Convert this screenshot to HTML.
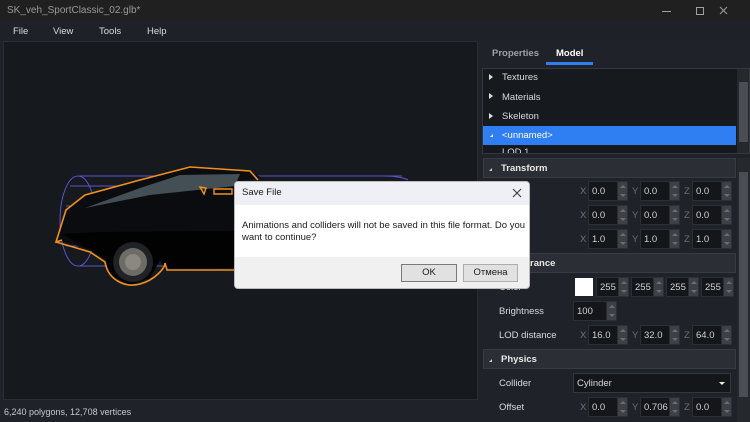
<!DOCTYPE html><html><head><style>
*{margin:0;padding:0;box-sizing:border-box}
body{width:750px;height:422px;overflow:hidden;background:#1f2228;font-family:"Liberation Sans",sans-serif;font-size:9.5px;color:#d8dadd;position:relative}
.a{position:absolute}
.inp{position:absolute;height:20px;width:40px;background:#141619;border:1px solid #2c3036}
.inp span{position:absolute;left:3px;top:4px;color:#d0d2d6}
.inp i{position:absolute;right:0;top:0;width:10px;height:18px;background:#3d4147;border-left:1px solid #2a2d32}
.inp i:before{content:"";position:absolute;left:2px;top:3px;border:3px solid transparent;border-bottom:3px solid #6a6e74;border-top:0}
.inp i:after{content:"";position:absolute;left:2px;bottom:3px;border:3px solid transparent;border-top:3px solid #6a6e74;border-bottom:0}
.lbl{position:absolute;color:#6d7177}
.hdr{position:absolute;left:483px;width:253px;height:20px;background:#2b2f35;border:1px solid #383c42;font-weight:bold;color:#e8e8ea}
.hdr b{position:absolute;left:17px;top:4px}
.hdr:before{content:"";position:absolute;left:5px;top:9px;border-left:3px solid transparent;border-bottom:3px solid #ccc}
.rl{position:absolute;left:499px;color:#d8dadd}
</style></head><body>
<div class="a" style="left:0;top:0;width:750px;height:22px;background:#202020"></div>
<div class="a" style="left:7px;top:5px;color:#9a9a9a;font-size:10px">SK_veh_SportClassic_02.glb*</div>
<svg class="a" style="left:650px;top:0" width="100" height="22"><g stroke="#a0a0a0" stroke-width="1" fill="none"><path d="M12 11.5H21"/><rect x="46.5" y="7.5" width="7" height="7"/><path d="M70 7L77 14M77 7L70 14"/></g></svg>
<div class="a" style="left:0;top:22px;width:750px;height:19px;background:#1e2228"></div>
<div class="a" style="left:13px;top:26px">File</div><div class="a" style="left:53px;top:26px">View</div><div class="a" style="left:99px;top:26px">Tools</div><div class="a" style="left:147px;top:26px">Help</div>
<div class="a" style="left:3px;top:41px;width:475px;height:359px;background:#16191d;border:1px solid #2a2d32"></div>
<svg class="a" style="left:0;top:150px" width="480" height="150">
<g fill="none" stroke="#5a55c8" stroke-width="1">
<ellipse cx="78" cy="71" rx="18" ry="45"/>
<path d="M78 26H402M78 116H240M70 36H240M66 56H240M64 76H240M66 96H240"/>
<path d="M385 26 C395 26 405 28 408 30"/>
</g>
<path d="M58 90 L66 60 L85 45 L140 30 L190 17 L250 21 L262 28 L240 31 V118 L165 120 L160 110 L150 128 L130 135 L110 125 L105 110 L90 100 Z" fill="#0b0c0f"/>
<path d="M85 58 L140 38 L180 25 L240 24 L235 36 L150 45 Z" fill="#5c6c74" opacity=".7"/>
<path d="M62 84 L100 82 L240 81 V118 L165 118 L160 110 L150 128 L130 135 L110 125 L105 108 L90 100 Z" fill="#020202"/>
<circle cx="133" cy="112" r="20" fill="#202225"/><circle cx="133" cy="112" r="14" fill="#6d6c66"/><circle cx="133" cy="112" r="8" fill="#8a8880"/>
<path d="M62 90 L56 92 L66 60 L85 45 L140 30 L190 17 L250 21 L258 30" fill="none" stroke="#f0901e" stroke-width="1.6"/>
<path d="M56 92 L90 102 L105 112 C108 130 125 138 140 134 C155 130 165 118 165 113 L167 120 L240 120" fill="none" stroke="#f0901e" stroke-width="1.6"/>
<path d="M200 37 L206 38 L204 44 Z M214 39 H232 V44 H214 Z" fill="none" stroke="#f0901e" stroke-width="1.4"/>
</svg>
<div class="a" style="left:0;top:400px;width:480px;height:22px;background:#1f2228"></div>
<div class="a" style="left:4px;top:407px;font-size:9px;color:#c8cace">6,240 polygons, 12,708 vertices</div>
<div class="a" style="left:492px;top:48px;color:#9ea2a8;font-weight:bold">Properties</div>
<div class="a" style="left:556px;top:48px;color:#fff;font-weight:bold">Model</div>
<div class="a" style="left:546px;top:62px;width:47px;height:3px;background:#2f7ff2"></div>
<div class="a" style="left:482px;top:68px;width:268px;height:86px;background:#16191d;border:1px solid #34383e;overflow:hidden"><div class="a" style="left:19px;top:78px;color:#d8dadd">LOD 1</div></div>
<div class="a" style="left:737px;top:69px;width:12px;height:84px;background:#25282d"></div>
<div class="a" style="left:739px;top:82px;width:9px;height:60px;background:#4a4e54"></div>
<div class="a" style="left:489px;top:74px;border-top:3px solid transparent;border-bottom:3px solid transparent;border-left:4px solid #ddd"></div>
<div class="a" style="left:489px;top:93px;border-top:3px solid transparent;border-bottom:3px solid transparent;border-left:4px solid #ddd"></div>
<div class="a" style="left:489px;top:113px;border-top:3px solid transparent;border-bottom:3px solid transparent;border-left:4px solid #ddd"></div>
<div class="a" style="left:502px;top:72px">Textures</div>
<div class="a" style="left:502px;top:92px">Materials</div>
<div class="a" style="left:502px;top:111px">Skeleton</div>
<div class="a" style="left:483px;top:126px;width:253px;height:19px;background:#2f7ff2"></div>
<div class="a" style="left:490px;top:134px;border-left:3px solid transparent;border-bottom:3px solid #fff"></div>
<div class="a" style="left:502px;top:130px;color:#fff">&lt;unnamed&gt;</div>
<div class="a" style="left:737px;top:158px;width:13px;height:264px;background:#25282d"></div>
<div class="a" style="left:739px;top:172px;width:9px;height:225px;background:#4a4e54"></div>
<div class="hdr" style="top:158px"><b>Transform</b></div>
<div class="hdr" style="top:253px"><b>Appearance</b></div>
<div class="hdr" style="top:349px"><b>Physics</b></div>
<div class="lbl" style="left:580px;top:186px">X</div><div class="inp" style="left:588px;top:181px"><span>0.0</span><i></i></div>
<div class="lbl" style="left:632px;top:186px">Y</div><div class="inp" style="left:640px;top:181px"><span>0.0</span><i></i></div>
<div class="lbl" style="left:684px;top:186px">Z</div><div class="inp" style="left:692px;top:181px"><span>0.0</span><i></i></div>
<div class="lbl" style="left:580px;top:210px">X</div><div class="inp" style="left:588px;top:205px"><span>0.0</span><i></i></div>
<div class="lbl" style="left:632px;top:210px">Y</div><div class="inp" style="left:640px;top:205px"><span>0.0</span><i></i></div>
<div class="lbl" style="left:684px;top:210px">Z</div><div class="inp" style="left:692px;top:205px"><span>0.0</span><i></i></div>
<div class="lbl" style="left:580px;top:234px">X</div><div class="inp" style="left:588px;top:229px"><span>1.0</span><i></i></div>
<div class="lbl" style="left:632px;top:234px">Y</div><div class="inp" style="left:640px;top:229px"><span>1.0</span><i></i></div>
<div class="lbl" style="left:684px;top:234px">Z</div><div class="inp" style="left:692px;top:229px"><span>1.0</span><i></i></div>
<div class="rl" style="top:282px">Color</div>
<div class="a" style="left:575px;top:278px;width:18px;height:18px;background:#fff"></div>
<div class="inp" style="left:596px;top:277px;width:33px"><span>255</span><i></i></div>
<div class="inp" style="left:631px;top:277px;width:33px"><span>255</span><i></i></div>
<div class="inp" style="left:666px;top:277px;width:33px"><span>255</span><i></i></div>
<div class="inp" style="left:701px;top:277px;width:33px"><span>255</span><i></i></div>
<div class="rl" style="top:306px">Brightness</div>
<div class="inp" style="left:573px;top:301px;width:44px"><span>100</span><i></i></div>
<div class="rl" style="top:330px">LOD distance</div>
<div class="lbl" style="left:580px;top:330px">X</div><div class="inp" style="left:588px;top:325px"><span>16.0</span><i></i></div>
<div class="lbl" style="left:632px;top:330px">Y</div><div class="inp" style="left:640px;top:325px"><span>32.0</span><i></i></div>
<div class="lbl" style="left:684px;top:330px">Z</div><div class="inp" style="left:692px;top:325px"><span>64.0</span><i></i></div>
<div class="rl" style="top:378px">Collider</div>
<div class="a" style="left:573px;top:373px;width:158px;height:20px;background:#141619;border:1px solid #34383e"><span style="position:absolute;left:3px;top:4px">Cylinder</span><span style="position:absolute;right:5px;top:8px;border-left:3px solid transparent;border-right:3px solid transparent;border-top:3px solid #eee"></span></div>
<div class="rl" style="top:402px">Offset</div>
<div class="lbl" style="left:580px;top:402px">X</div><div class="inp" style="left:588px;top:397px"><span>0.0</span><i></i></div>
<div class="lbl" style="left:632px;top:402px">Y</div><div class="inp" style="left:640px;top:397px"><span>0.706</span><i></i></div>
<div class="lbl" style="left:684px;top:402px">Z</div><div class="inp" style="left:692px;top:397px"><span>0.0</span><i></i></div>
<div class="a" style="left:234px;top:181px;width:296px;height:108px;background:#fff;border:1px solid #bbb;border-radius:4px;overflow:hidden;color:#1a1a1a">
<div class="a" style="left:0;top:0;width:296px;height:23px;background:#eef0f5"></div>
<div class="a" style="left:7px;top:5px">Save File</div>
<svg class="a" style="left:277px;top:6px" width="10" height="10"><path d="M1 1L9 9M9 1L1 9" stroke="#333" stroke-width="1"/></svg>
<div class="a" style="left:7px;top:38px;line-height:12px;width:285px">Animations and colliders will not be saved in this file format. Do you want to continue?</div>
<div class="a" style="left:0;top:75px;width:296px;height:33px;background:#f0f0f0"></div>
<div class="a" style="left:166px;top:82px;width:56px;height:18px;background:#e1e1e1;border:1px solid #7a7a7a;text-align:center;line-height:16px">OK</div>
<div class="a" style="left:228px;top:82px;width:55px;height:18px;background:#e1e1e1;border:1px solid #adadad;text-align:center;line-height:16px">Отмена</div>
</div>
</body></html>
